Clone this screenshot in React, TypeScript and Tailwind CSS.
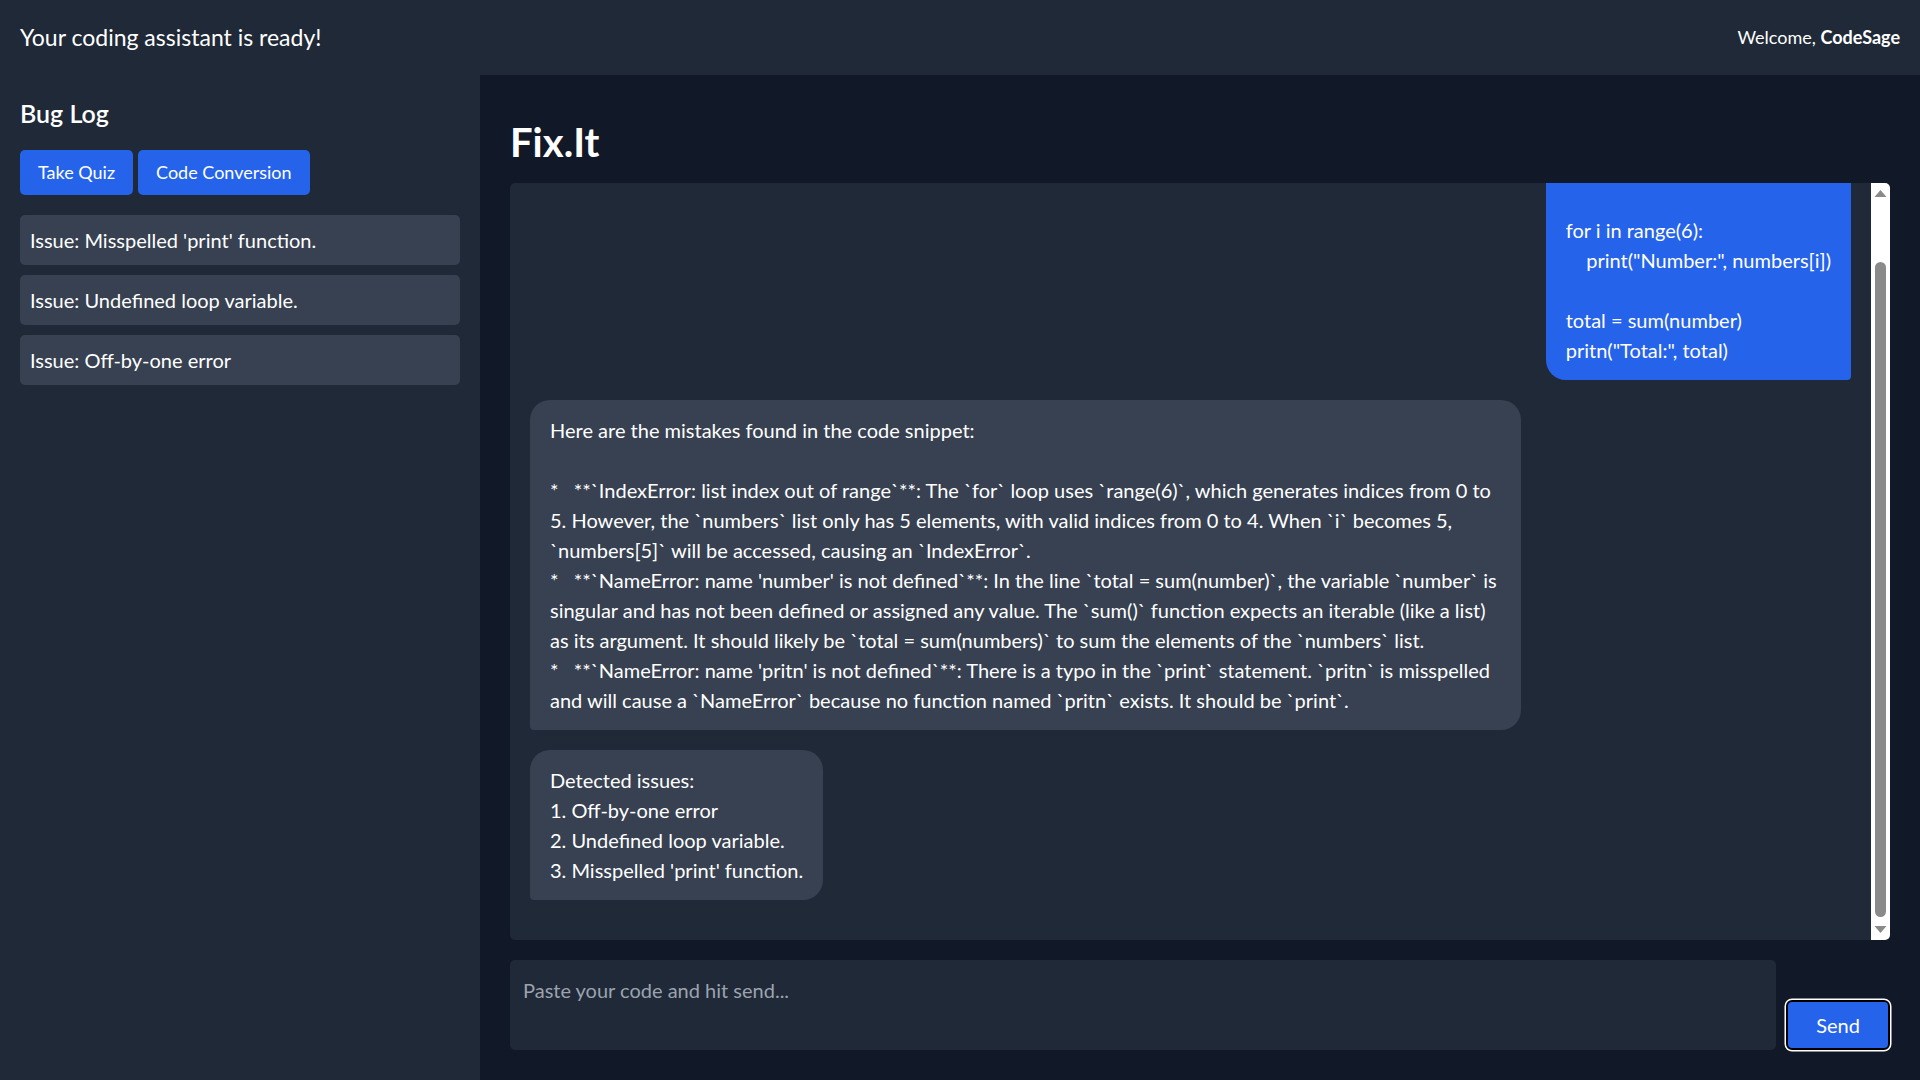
import { useEffect, useRef } from "react";

const issues = [
  "Issue: Misspelled 'print' function.",
  "Issue: Undefined loop variable.",
  "Issue: Off-by-one error",
];

const userCode = `numbers = [1, 2, 3, 4, 5]

for i in range(6):
    print("Number:", numbers[i])

total = sum(number)
pritn("Total:", total)`;

const botReply = `Here are the mistakes found in the code snippet:

*   **\`IndexError: list index out of range\`**: The \`for\` loop uses \`range(6)\`, which generates indices from 0 to 5. However, the \`numbers\` list only has 5 elements, with valid indices from 0 to 4. When \`i\` becomes 5, \`numbers[5]\` will be accessed, causing an \`IndexError\`.
*   **\`NameError: name 'number' is not defined\`**: In the line \`total = sum(number)\`, the variable \`number\` is singular and has not been defined or assigned any value. The \`sum()\` function expects an iterable (like a list) as its argument. It should likely be \`total = sum(numbers)\` to sum the elements of the \`numbers\` list.
*   **\`NameError: name 'pritn' is not defined\`**: There is a typo in the \`print\` statement. \`pritn\` is misspelled and will cause a \`NameError\` because no function named \`pritn\` exists. It should be \`print\`.`;

const detected = `Detected issues:
1. Off-by-one error
2. Undefined loop variable.
3. Misspelled 'print' function.`;

const messages = [
  { from: "user", text: userCode },
  { from: "bot", text: botReply },
  { from: "bot", text: detected },
];

function Scrollbar() {
  return (
    <div className="w-[19px] shrink-0 bg-white flex flex-col">
      <svg width="19" height="19" viewBox="0 0 19 19" className="shrink-0">
        <path d="M3.5 14H15.5L9.5 7Z" fill="#8a8a8a" />
      </svg>
      <div className="flex-1 flex flex-col pt-[60px] pb-[4px] px-[4px]">
        <div className="flex-1 rounded-full bg-[#8a8a8a]" />
      </div>
      <svg width="19" height="19" viewBox="0 0 19 19" className="shrink-0">
        <path d="M3.5 5H15.5L9.5 12Z" fill="#8a8a8a" />
      </svg>
    </div>
  );
}

export default function App() {
  const chatRef = useRef<HTMLDivElement>(null);

  // keep the chat scrolled to the latest message
  useEffect(() => {
    if (chatRef.current) chatRef.current.scrollTop = chatRef.current.scrollHeight;
  }, []);

  return (
    <div className="h-screen w-full flex flex-col bg-[#111827] text-white font-['Lato',_sans-serif]">
      <header className="h-[75px] shrink-0 bg-[#1f2937] flex items-center justify-between px-[20px]">
        <div className="text-[23px]">Your coding assistant is ready!</div>
        <div className="text-[18px]">
          Welcome, <span className="font-bold">CodeSage</span>
        </div>
      </header>

      <div className="flex flex-1 min-h-0">
        <aside className="w-[480px] shrink-0 bg-[#1f2937] p-[20px]">
          <h2 className="text-[25px] leading-[35px] font-semibold mt-[1px] mb-[19px]">Bug Log</h2>
          <div className="flex gap-[5px] mb-[20px]">
            <button className="h-[45px] px-[18px] rounded-[5px] bg-[#2563eb] text-[18px]">Take Quiz</button>
            <button className="h-[45px] px-[18px] rounded-[5px] bg-[#2563eb] text-[18px]">Code Conversion</button>
          </div>
          <div className="flex flex-col gap-[10px]">
            {issues.map((issue) => (
              <div key={issue} className="h-[50px] p-[10px] rounded-[5px] bg-[#374151] text-[20px] leading-[30px]">
                {issue}
              </div>
            ))}
          </div>
        </aside>

        <main className="flex-1 min-w-0 flex flex-col p-[30px]">
          <h1 className="text-[40px] leading-[48px] font-bold mt-[13px] mb-[17px]">Fix.It</h1>

          <div className="flex-1 min-h-0 flex bg-[#1f2937] rounded-[5px] overflow-hidden">
            <div
              ref={chatRef}
              className="flex-1 min-w-0 overflow-y-scroll [scrollbar-width:none] p-[20px] text-[20px] leading-[30px]"
            >
              {messages.map((m, i) =>
                m.from === "user" ? (
                  <div
                    key={i}
                    className="ml-auto w-fit max-w-[75%] mb-[20px] bg-[#2563eb] rounded-[20px] rounded-br-[4px] px-[20px] py-[15px] whitespace-pre-wrap"
                  >
                    {m.text}
                  </div>
                ) : (
                  <div
                    key={i}
                    className="mr-auto w-fit max-w-[75%] mb-[20px] bg-[#374151] rounded-[20px] rounded-bl-[4px] px-[20px] py-[15px] whitespace-pre-wrap"
                  >
                    {m.text}
                  </div>
                )
              )}
            </div>
            <Scrollbar />
          </div>

          <div className="flex items-end gap-[10px] mt-[20px]">
            <textarea
              placeholder="Paste your code and hit send..."
              className="flex-1 h-[90px] resize-none bg-[#1f2937] rounded-[5px] px-[13px] py-[15px] text-[20px] leading-[30px] text-white placeholder:text-[#9ca3af] outline-none"
            />
            <button className="w-[104px] h-[50px] shrink-0 rounded-[6px] bg-[#2563eb] border-2 border-black ring-[1.5px] ring-white text-[20px]">
              Send
            </button>
          </div>
        </main>
      </div>
    </div>
  );
}
